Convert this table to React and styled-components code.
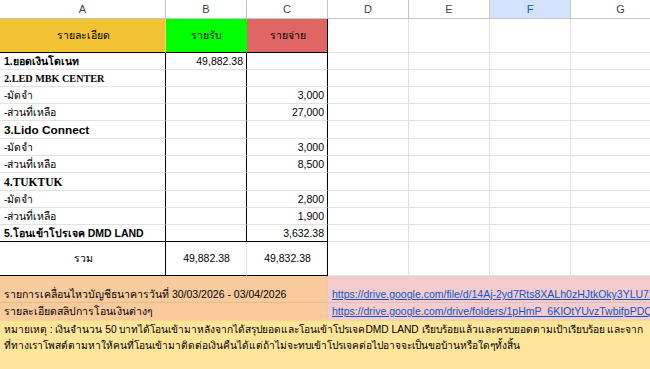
import styled, { createGlobalStyle } from 'styled-components';

const GlobalStyle = createGlobalStyle`
  html, body {
    margin: 0;
    padding: 0;
    background: #fff;
    overflow: hidden;
  }
`;

const COLS = '166px 81px 81px 81px 81px 81px 100px';
const GRID = '#e2e2e2';
const BLACK = '#000';

const Sheet = styled.div`
  width: 650px;
  height: 369px;
  overflow: hidden;
  font-family: 'Liberation Sans', Arial, 'Noto Sans', sans-serif;
  font-size: 10.5px;
  color: #000;
`;

const HeaderBar = styled.div`
  display: grid;
  grid-template-columns: ${COLS};
  height: 19px;
`;

const ColLetter = styled.div`
  box-sizing: border-box;
  display: flex;
  align-items: center;
  justify-content: center;
  font-size: 11px;
  line-height: 12px;
  color: ${(p) => (p.$active ? '#0b57d0' : '#444')};
  background: ${(p) => (p.$active ? '#d3e3fd' : '#fff')};
  border-right: 1px solid #c7c7c7;
  border-bottom: 1px solid #c7c7c7;
`;

const Row = styled.div`
  display: grid;
  grid-template-columns: ${COLS};
  height: ${(p) => p.$h}px;
`;

const Cell = styled.div`
  box-sizing: border-box;
  grid-column: span ${(p) => p.$span || 1};
  display: flex;
  align-items: ${(p) => (p.$middle ? 'center' : 'flex-end')};
  justify-content: ${(p) =>
    p.$align === 'center' ? 'center' : p.$align === 'right' ? 'flex-end' : 'flex-start'};
  padding: 0 3px ${(p) => (p.$middle ? 0 : 1)}px 4px;
  line-height: 13px;
  white-space: nowrap;
  overflow: hidden;
  background: ${(p) => p.$bg || 'transparent'};
  border-right: 1px solid ${(p) => p.$rb || GRID};
  border-bottom: 1px solid ${(p) => p.$bb || GRID};
  font-weight: ${(p) => (p.$bold ? 700 : 400)};
  font-family: ${(p) =>
    p.$serif
      ? "'Liberation Serif', 'Times New Roman', serif"
      : "'Liberation Sans', Arial, 'Noto Sans', sans-serif"};
  font-size: ${(p) => p.$size || 10.5}px;
`;

const Link = styled.a`
  color: #1155cc;
  text-decoration: underline;
  font-size: 10.5px;
`;

const NoteCell = styled.div`
  box-sizing: border-box;
  grid-column: span 7;
  background: #ffe599;
  border-top: 1px solid #f3d98a;
  padding: 1px 4px;
  font-size: 10.2px;
  line-height: 16px;
  white-space: nowrap;
  overflow: hidden;
`;

const body = [
  { h: 17, a: '1.ยอดเงินโดเนท', bold: true, b: '49,882.38' },
  { h: 17, a: '2.LED MBK CENTER', bold: true, serif: true, size: 10.2 },
  { h: 17, a: '-มัดจำ', c: '3,000' },
  { h: 17, a: '-ส่วนที่เหลือ', c: '27,000' },
  { h: 18, a: '3.Lido Connect', bold: true, size: 11.8 },
  { h: 17, a: '-มัดจำ', c: '3,000' },
  { h: 17, a: '-ส่วนที่เหลือ', c: '8,500' },
  { h: 18, a: '4.TUKTUK', bold: true, serif: true, size: 11.5 },
  { h: 17, a: '-มัดจำ', c: '2,800' },
  { h: 17, a: '-ส่วนที่เหลือ', c: '1,900' },
  { h: 17, a: '5.โอนเข้าโปรเจค DMD LAND', bold: true, c: '3,632.38', last: true },
];

function Blank({ count }) {
  return Array.from({ length: count }, (_, i) => <Cell key={i} />);
}

export default function App() {
  return (
    <Sheet>
      <GlobalStyle />
      <HeaderBar>
        {['A', 'B', 'C', 'D', 'E', 'F', 'G'].map((l) => (
          <ColLetter key={l} $active={l === 'F'}>
            {l}
          </ColLetter>
        ))}
      </HeaderBar>

      <Row $h={34}>
        <Cell $middle $align="center" $bg="#f1c232" $rb="#f6d77a" $bb={BLACK}>
          รายละเอียด
        </Cell>
        <Cell $middle $align="center" $bg="#00ff00" $rb="#00ff00" $bb={BLACK}>
          รายรับ
        </Cell>
        <Cell $middle $align="center" $bg="#e06666" $rb={BLACK} $bb={BLACK}>
          รายจ่าย
        </Cell>
        <Blank count={4} />
      </Row>

      {body.map((r, i) => (
        <Row key={i} $h={r.h}>
          <Cell $bold={r.bold} $serif={r.serif} $size={r.size} $rb={BLACK} $bb={r.last ? BLACK : GRID}>
            {r.a}
          </Cell>
          <Cell $align="right" $rb={BLACK} $bb={r.last ? BLACK : GRID}>
            {r.b}
          </Cell>
          <Cell $align="right" $rb={BLACK} $bb={r.last ? BLACK : GRID}>
            {r.c}
          </Cell>
          <Blank count={4} />
        </Row>
      ))}

      <Row $h={34}>
        <Cell $middle $align="center" $rb={BLACK} $bb={BLACK}>
          รวม
        </Cell>
        <Cell $middle $align="center" $bb={BLACK}>
          49,882.38
        </Cell>
        <Cell $middle $align="center" $rb={BLACK} $bb={BLACK}>
          49,832.38
        </Cell>
        <Blank count={4} />
      </Row>

      <Row $h={27}>
        <Cell $span={3} $bg="#f9cb9c" $rb="#f0c4b8" $bb="#e8bb8f">
          รายการเคลื่อนไหวบัญชีธนาคารวันที่ 30/03/2026 - 03/04/2026
        </Cell>
        <Cell $span={4} $bg="#f4cccc" $rb="#f4cccc" $bb="#e6bcbc">
          <Link href="#">https://drive.google.com/file/d/14Aj-2yd7Rts8XALh0zHJtkOky3YLU7xQ/view</Link>
        </Cell>
      </Row>

      <Row $h={17}>
        <Cell $span={3} $bg="#f9cb9c" $rb="#f0c4b8" $bb="#f9cb9c">
          รายละเอียดสลิปการโอนเงินต่างๆ
        </Cell>
        <Cell $span={4} $bg="#f4cccc" $rb="#f4cccc" $bb="#f4cccc">
          <Link href="#">https://drive.google.com/drive/folders/1pHmP_6KIOtYUvzTwbifpPDQ</Link>
        </Cell>
      </Row>

      <Row $h={60}>
        <NoteCell>
          หมายเหตุ : เงินจำนวน 50 บาทได้โอนเข้ามาหลังจากได้สรุปยอดและโอนเข้าโปรเจคDMD LAND เรียบร้อยแล้วและครบยอดตามเป้าเรียบร้อย และจาก
          <br />
          ที่ทางเราโพสต์ตามหาให้คนที่โอนเข้ามาติดต่อเงินคืนได้แต่ถ้าไม่จะทบเข้าโปรเจคต่อไปอาจจะเป็นขอบ้านหรือใดๆทั้งสิ้น
        </NoteCell>
      </Row>
    </Sheet>
  );
}
